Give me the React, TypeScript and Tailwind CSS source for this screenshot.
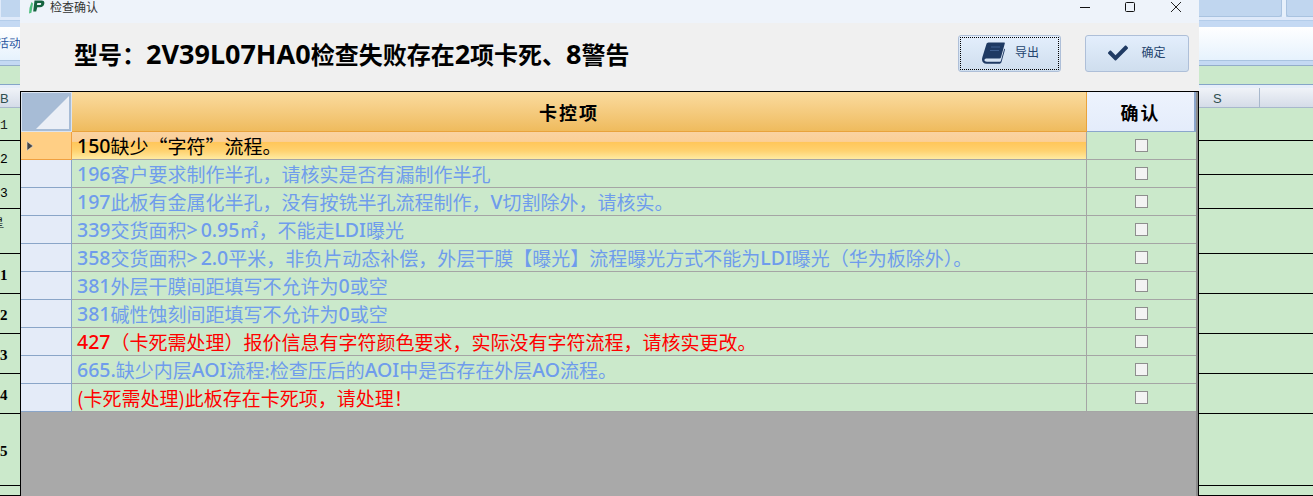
import React from "react";
import { FaCheck } from "react-icons/fa";

const CJK = "font-['Noto_Sans_CJK_SC',sans-serif]";
const LATIN = "font-['Noto_Sans',sans-serif]";

function Mixed({ text, latinClass }: { text: string; latinClass: string }) {
  const parts = text.split(/(>|[0-9A-Za-z.]+)/);
  return (
    <>
      {parts.map((p, i) =>
        i % 2 === 1 ? (
          <span key={i} className={`${LATIN} ${latinClass} ${p === ">" ? "mr-[3px]" : ""}`}>
            {p}
          </span>
        ) : (
          <span key={i}>{p}</span>
        )
      )}
    </>
  );
}

const BLUE = "text-[#6f9cec]";
const RED = "text-[#ff0000]";

const rows: { text: string; color: string; selected?: boolean }[] = [
  { text: "150缺少“字符”流程。", color: "text-black", selected: true },
  { text: "196客户要求制作半孔，请核实是否有漏制作半孔", color: BLUE },
  { text: "197此板有金属化半孔，没有按铣半孔流程制作，V切割除外，请核实。", color: BLUE },
  { text: "339交货面积>0.95㎡，不能走LDI曝光", color: BLUE },
  { text: "358交货面积>2.0平米，非负片动态补偿，外层干膜【曝光】流程曝光方式不能为LDI曝光（华为板除外）。", color: BLUE },
  { text: "381外层干膜间距填写不允许为0或空", color: BLUE },
  { text: "381碱性蚀刻间距填写不允许为0或空", color: BLUE },
  { text: "427（卡死需处理）报价信息有字符颜色要求，实际没有字符流程，请核实更改。", color: RED },
  { text: "665.缺少内层AOI流程:检查压后的AOI中是否存在外层AO流程。", color: BLUE },
  { text: "(卡死需处理)此板存在卡死项，请处理！", color: RED },
];

const SERIF = "font-bold font-['Liberation_Serif',serif] text-[15px] translate-y-[2px]";
const sheetRows: { h: string; label?: string; cls?: string }[] = [
  { h: "h-[34px]", label: "1" },
  { h: "h-[34px]", label: "2" },
  { h: "h-[34px]", label: "3" },
  { h: "h-[45px]", label: "星", cls: "-translate-x-[8px] -translate-y-[8px] text-[12px]" },
  { h: "h-[40px]", label: "1", cls: SERIF },
  { h: "h-[40px]", label: "2", cls: SERIF },
  { h: "h-[40px]", label: "3", cls: SERIF },
  { h: "h-[40px]", label: "4", cls: SERIF },
  { h: "h-[72px]", label: "5", cls: SERIF },
  { h: "h-[10px]" },
];

function SheetChrome({ children, tiles }: { children: React.ReactNode; tiles: React.ReactNode }) {
  return (
    <div className="flex h-[88px] flex-col">
      <div className="flex h-[17px] bg-[#c0d6ef]">{tiles}</div>
      <div className="h-[3px] bg-[#dfeafa]" />
      <div className="h-[7px] border-t border-[#b4cdea] bg-[#c4d9f3]" />
      <div className="h-[33px] shrink-0 overflow-hidden bg-gradient-to-b from-white to-[#e6f2fd]">{children}</div>
      <div className="h-[6px] border-b border-[#93adc9] border-t border-t-[#a9c3e0] bg-[#c4d9f3]" />
      <div className="h-[19px] border-b border-[#85a5c8] bg-[#cbe9cb]" />
      <div className="h-[3px] bg-[#e6eefa]" />
    </div>
  );
}

function LeftSheet() {
  return (
    <div className="w-[20px] shrink-0 overflow-hidden bg-[#cbe9cb]">
      <SheetChrome
        tiles={
          <>
            <div className="w-[1px] bg-[#dfeafa]" />
            <div className="h-[17px] flex-1 bg-[#c0d6ef]" />
          </>
        }
      >
        <div className="-ml-[3px] whitespace-nowrap pt-[9px] text-[12px] leading-[14px] text-[#1b4f9c]">活动</div>
      </SheetChrome>
      <div className="h-[20px] border-b border-[#a8b8cc] bg-gradient-to-b from-[#f0f3f8] to-[#d5dce8] pt-[3px] font-['Liberation_Sans',sans-serif] text-[13px] leading-[15px] text-[#2f4f4f]">
        B
      </div>
      <div className="h-[33px] border-b border-black pt-[10px] font-['Liberation_Mono',monospace] text-[13px] leading-[15px] text-[#222]">
        1
      </div>
      {sheetRows.slice(1).map((r, i) => (
        <div key={i} className={`${r.h} flex items-center border-b border-black text-[14px] leading-none text-black`}>
          <span className={r.cls ?? "translate-y-[2px] font-['Liberation_Mono',monospace] text-[13px] font-normal"}>
            {r.label}
          </span>
        </div>
      ))}
    </div>
  );
}

function RightSheet() {
  return (
    <div className="min-w-0 flex-1 overflow-hidden bg-[#cbe9cb]">
      <SheetChrome
        tiles={
          <>
            <div className="w-[83px] rounded-br-[3px] border-b border-r border-[#a9c3e0] bg-[#c0d6ef]" />
            <div className="w-[4px] bg-[#e6f0fb]" />
            <div className="flex-1 rounded-bl-[3px] border-b border-l border-[#a9c3e0] bg-[#c0d6ef]" />
          </>
        }
      >
        <span />
      </SheetChrome>
      <div className="flex h-[20px] border-b border-[#a8b8cc] bg-gradient-to-b from-[#f0f3f8] to-[#d5dce8]">
        <div className="w-[61px] border-r border-[#a8b8cc] pl-[14px] pt-[3px] font-['Liberation_Sans',sans-serif] text-[13px] leading-[15px] text-[#2f4f4f]">
          S
        </div>
      </div>
      <div className="h-[33px] border-b border-black" />
      {sheetRows.slice(1).map((r, i) => (
        <div key={i} className={`${r.h} border-b border-black`} />
      ))}
    </div>
  );
}

function AppIcon() {
  return (
    <svg width="17" height="15" viewBox="0 0 17 15" className="shrink-0">
      <path d="M6.5 .5h7c2.2 0 3.2 1.2 2.8 3.2-.4 2.3-2 3.5-4.3 3.5H9.3L8.2 11.5H5.2z" fill="#14633f" />
      <path d="M9.3 3h3c.8 0 1 .5.9 1-.1.7-.7 1-1.4 1H8.9z" fill="#eef3fa" />
      <path d="M3.5 2 1.5 8 1 13.5l2.4-.8L5 3.5z" fill="#4fc07f" />
    </svg>
  );
}

function BookIcon() {
  return (
    <svg width="23" height="22" viewBox="0 0 23 22" className="ml-[2px] shrink-0">
      <path
        d="M6.5.5H22c.6 0 1 .5.8 1.1L19 15.2c-.3 1-1 1.3-2 1.3H5c-1.6 0-2.6.6-2.6 1.6S3.4 19.8 5 19.8h12.5c.8 0 1.2-.3 1.5-1.2L22.3 6.5l.7 1-3.4 12.2c-.4 1.4-1.3 2.1-2.8 2.1H4.5C1.8 21.8 0 20 0 17.6c0-.9.2-1.8.5-2.8L4.3 2.4C4.7 1.2 5.4.5 6.5.5z"
        fill="#1f3a63"
      />
      <path d="M9 5h9M8 8.5h9" stroke="#3f5f8f" strokeWidth="1" />
    </svg>
  );
}

function WindowControls() {
  return (
    <div className="flex items-center">
      <svg width="12" height="12" viewBox="0 0 12 12" className="mr-[33px]">
        <path d="M1 6.5h10" stroke="#111" strokeWidth="1" />
      </svg>
      <svg width="12" height="12" viewBox="0 0 12 12" className="mr-[34px]">
        <rect x="1.5" y="1.5" width="9" height="9" rx="1" fill="none" stroke="#111" strokeWidth="1" />
      </svg>
      <svg width="12" height="12" viewBox="0 0 12 12" className="mr-[17px]">
        <path d="M1 1l10 10M11 1L1 11" stroke="#222" strokeWidth="1" />
      </svg>
    </div>
  );
}

function ActionButton({
  label,
  icon,
  focused,
  w,
  labelGap,
}: {
  label: string;
  icon: React.ReactNode;
  focused?: boolean;
  w: string;
  labelGap: string;
}) {
  return (
    <button
      className={`${w} flex h-[37px] items-center justify-center rounded-[3px] border border-[#aebfd8] bg-gradient-to-b from-[#e3eefc] to-[#cfdeee] p-[1px]`}
    >
      <span
        className={`flex h-full w-full items-center justify-center border border-dotted ${
          focused ? "border-black" : "border-transparent"
        }`}
      >
        {icon}
        <span className={`${CJK} ${labelGap} pb-[3px] text-[12px] leading-none text-[#24446e]`}>{label}</span>
      </span>
    </button>
  );
}

function Row({ text, color, selected }: { text: string; color: string; selected?: boolean }) {
  return (
    <div className="flex h-[28px]">
      <div
        className={`flex w-[51px] shrink-0 items-center border-b border-r ${
          selected ? "border-[#f0a040] bg-[#ffcf85]" : "border-[#8aa5c8] bg-[#e4ebf8]"
        }`}
      >
        {selected && (
          <svg width="8" height="10" viewBox="0 0 8 10" className="ml-[5px]">
            <path d="M1 0.5 7 5 1 9.5z" fill="#444" stroke="#ddd" strokeWidth="0.6" />
          </svg>
        )}
      </div>
      <div
        className={`flex min-w-0 flex-1 items-center whitespace-nowrap border-b border-r border-[#a5a5a5] pl-[5px] text-[19px] leading-none ${color} ${
          selected
            ? "bg-[linear-gradient(to_bottom,#fad3a2_0%,#fbcf97_35%,#ffc65a_38%,#ffd270_70%,#ffeba2_100%)]"
            : "bg-[#cbe9cb]"
        }`}
      >
        <Mixed text={text} latinClass="text-[19.5px] font-medium" />
      </div>
      <div className="flex w-[109px] shrink-0 items-center justify-center border-b border-[#a5a5a5] bg-[#cbe9cb]">
        <input
          type="checkbox"
          readOnly
          className="h-[13px] w-[13px] appearance-none border border-[#8e8e8e] bg-[#f3f3f3]"
        />
      </div>
    </div>
  );
}

function Grid() {
  return (
    <div className="flex min-h-0 flex-1 border-l border-t border-black">
      <div className="flex min-w-0 flex-1 flex-col bg-[#a9a9a9]">
        <div className="flex h-[40px] shrink-0">
          <div className="flex w-[51px] shrink-0 items-end justify-end border-[1px] border-[#dbe4f0] bg-[#a7bcd6] pb-[2px] pr-[2px]">
            <svg width="33" height="33" viewBox="0 0 33 33">
              <path d="M33 0V33H0z" fill="#ebeff6" />
            </svg>
          </div>
          <div className="flex min-w-0 flex-1 items-center justify-center border-b border-r border-[#e9a33c] bg-gradient-to-b from-[#fadb9e] to-[#efbb5d] pr-[20px] text-[18px] font-bold leading-none tracking-[2px] text-black">
            卡控项
          </div>
          <div className="flex w-[109px] shrink-0 items-center justify-center border-b border-r-[2px] border-[#8ba6cc] bg-gradient-to-b from-[#edf3fd] to-[#e4ecfb] text-[18px] font-bold leading-none tracking-[2px] text-black">
            确认
          </div>
        </div>
        {rows.map((r, i) => (
          <Row key={i} {...r} />
        ))}
      </div>
      <div className="w-[2px] shrink-0 bg-[#8a8a8a]" />
      <div className="w-[1px] shrink-0 bg-black" />
    </div>
  );
}

function Dialog() {
  return (
    <div className={`${CJK} flex h-[496px] w-[1179px] shrink-0 flex-col`}>
      <div className="flex h-[23px] shrink-0 items-start justify-between bg-[#eef3fa] pl-[8px]">
        <div className="flex items-start">
          <AppIcon />
          <span className="ml-[5px] text-[12px] leading-[13px] text-[#333]">检查确认</span>
        </div>
        <div className="pt-[1px]">
          <WindowControls />
        </div>
      </div>
      <div className="flex h-[68px] shrink-0 items-center bg-[#f0f0f0] pb-[8px] pl-[54px] pr-[10px]">
        <div className="flex-1 whitespace-nowrap text-[24px] font-bold leading-none text-black">
          <Mixed text="型号：2V39L07HA0检查失败存在2项卡死、8警告" latinClass="text-[27px] font-bold" />
        </div>
        <div className="flex items-center gap-[24px]">
          <ActionButton w="w-[103px]" focused labelGap="ml-[10px]" label="导出" icon={<BookIcon />} />
          <ActionButton
            w="w-[104px]"
            labelGap="ml-[13px]"
            label="确定"
            icon={<FaCheck className="text-[20px] text-[#1f3a63]" />}
          />
        </div>
      </div>
      <Grid />
    </div>
  );
}

export default function App() {
  return (
    <div className="flex h-[496px] w-[1313px] overflow-hidden bg-[#cbe9cb]">
      <LeftSheet />
      <Dialog />
      <RightSheet />
    </div>
  );
}
